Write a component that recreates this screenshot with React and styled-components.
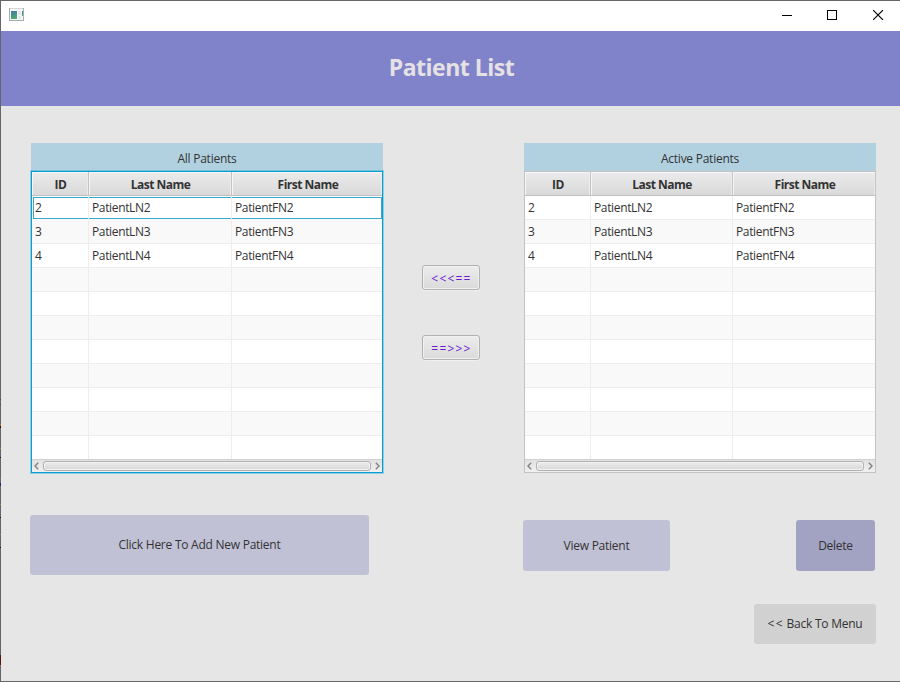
import React from 'react';
import styled, { createGlobalStyle, css } from 'styled-components';

const Global = createGlobalStyle`
  * { box-sizing: border-box; }
  body {
    margin: 0;
    background: #e6e6e6;
    font-family: "Open Sans", "Noto Sans", sans-serif;
    font-size: 12px;
    line-height: 16px;
    color: #333;
  }
  button { font: inherit; color: inherit; border: 0; padding: 0; margin: 0; }
`;

const Window = styled.div`
  display: flex;
  width: 900px;
  height: 682px;
  overflow: hidden;
  border-top: 1px solid #666;
  border-bottom: 1px solid #666;
  background: #e6e6e6;
`;

const mark = (color, from, to) =>
  `transparent ${from}px, ${color} ${from}px, ${color} ${to}px, transparent ${to}px`;

const LeftEdge = styled.div`
  width: 1px;
  flex: none;
  background:
    linear-gradient(
      ${mark('#484848', 398, 399)}, ${mark('#484848', 403, 404)},
      ${mark('#a06a2c', 423, 425)}, ${mark('#1c1510', 425, 427)},
      ${mark('#a87d3e', 447, 448)}, ${mark('#161616', 456, 457)},
      ${mark('#8a7350', 478, 479)}, ${mark('#1d2f66', 482, 485)},
      ${mark('#a87d3e', 503, 504)}, ${mark('#101010', 516, 517)},
      ${mark('#a87d3e', 533, 534)}, ${mark('#101010', 546, 547)},
      ${mark('#501515', 654, 664)}, ${mark('#a07040', 664, 665)}
    ),
    #666;
`;

const Frame = styled.div`
  flex: 1;
  display: flex;
  flex-direction: column;
`;

const TitleBar = styled.div`
  display: flex;
  justify-content: space-between;
  height: 30px;
  background: #fff;
`;

const AppIcon = styled.svg`
  width: 16px;
  height: 14px;
  margin: 7px 0 0 8px;
`;

const WindowControls = styled.div`
  display: flex;
  gap: 35px;
  padding: 9px 16px 0 0;
`;

const ControlIcon = styled.svg`
  width: 11px;
  height: 10px;
`;

const Banner = styled.header`
  height: 75px;
  background: #8083c9;
  text-align: center;
`;

const Title = styled.h1`
  margin: 0 0 0 2px;
  padding-top: 20px;
  font-size: 23px;
  line-height: 32px;
  font-weight: 700;
  letter-spacing: -0.5px;
  color: #e6e1e4;
`;

const Row = styled.div`
  display: flex;
  align-items: flex-start;
`;

const Tables = styled(Row)`
  padding: 37px 0 0 30px;
`;

const Panel = styled.section`
  width: 352px;
`;

const PanelTitle = styled.div`
  height: 28px;
  padding-top: 8px;
  background: #b1d1e1;
  text-align: center;
  letter-spacing: -0.25px;
`;

const Table = styled.div`
  height: 302px;
  border: 1px solid ${(p) => (p.$focused ? '#039ed3' : '#c3c3c3')};
  box-shadow: ${(p) => (p.$focused ? '0 0 0 1px rgba(3, 158, 211, 0.35)' : 'none')};
  background: #fff;
`;

const Line = styled.div`
  display: grid;
  grid-template-columns: ${(p) => p.$columns};
`;

const HeadCell = styled.div`
  height: 24px;
  padding: 5px 0 0 1px;
  border-right: 1px solid #c3c3c3;
  border-bottom: 1px solid #c0c0c0;
  box-shadow: inset 1px 1px 0 #f6f6f6, inset -1px 0 0 #ececec;
  background: linear-gradient(#ebebeb, #d9d9d9);
  font-weight: 700;
  text-align: center;
  letter-spacing: -0.5px;
  &:last-child { border-right: 0; padding-left: 2px; }
`;

const Cell = styled.div`
  height: ${(p) => (p.$last ? 23 : 24)}px;
  padding: 4px 0 0 3px;
  border-right: 1px solid #ededed;
  border-bottom: ${(p) => (p.$last ? 0 : 1)}px solid #ededed;
  background: ${(p) => (p.$odd ? '#f9f9f9' : '#fff')};
  letter-spacing: -0.35px;
  &:last-child { border-right: 0; }
  ${(p) => p.$focused && css`
    border-bottom-color: #f9f9f9;
    box-shadow: inset 0 1px 0 #fff, inset 0 2px 0 #35a9d0, inset 0 -1px 0 #35a9d0;
    &:first-child {
      box-shadow: inset 1px 1px 0 #fff, inset 2px 2px 0 #35a9d0, inset 0 -1px 0 #35a9d0;
    }
    &:last-child {
      box-shadow: inset 0 1px 0 #fff, inset -1px 2px 0 #35a9d0, inset 0 -1px 0 #35a9d0;
    }
  `}
`;

const ScrollBar = styled.div`
  display: flex;
  justify-content: space-between;
  align-items: center;
  height: 13px;
  padding: 0 2px;
  border-top: 1px solid #d0d0d0;
  background: linear-gradient(#e2e2e2, #f0f0f0);
`;

const Thumb = styled.div`
  width: 328px;
  height: 10px;
  border: 1px solid #b0b0b0;
  border-radius: 3px;
  box-shadow: inset 0 0 0 1px #f3f3f3;
  background: linear-gradient(#ececec, #d8d8d8);
`;

const Chevron = styled.svg`
  width: 5px;
  height: 8px;
  fill: none;
  stroke: #858585;
  stroke-width: 1.5;
`;

const Transfers = styled.div`
  display: flex;
  flex-direction: column;
  gap: 45px;
  margin: 122px 44px 0 39px;
`;

const TransferButton = styled.button`
  width: 58px;
  height: 25px;
  border: 1px solid #b1b1b1;
  border-radius: 3px;
  background: linear-gradient(#ececec, #dadada);
  box-shadow: inset 0 0 0 1px #f1f1f1, 0 1px 0 #efefef;
  color: #6a1ad0;
  line-height: 25px;
  letter-spacing: 1.2px;
  text-indent: 1px;
`;

const ActionButton = styled.button`
  width: ${(p) => p.$width}px;
  height: ${(p) => p.$height}px;
  border-radius: 3px;
  background: ${(p) => p.$color};
  letter-spacing: -0.25px;
`;

const Arrows = styled.span`
  letter-spacing: 1.2px;
`;

const Actions = styled(Row)`
  padding: 42px 25px 0 29px;
`;

const RightActions = styled.div`
  display: flex;
  flex: 1;
  justify-content: space-between;
  margin: 5px 0 0 154px;
`;

const Footer = styled(Row)`
  justify-content: flex-end;
  padding: 33px 24px 0 0;
  margin-top: -4px;
`;

const patients = [2, 3, 4].map((id) => [id, `PatientLN${id}`, `PatientFN${id}`]);
const rows = Array.from({ length: 11 }, (_, i) => patients[i] || ['', '', '']);

function PatientTable({ title, columns, focused }) {
  return (
    <Panel>
      <PanelTitle>{title}</PanelTitle>
      <Table $focused={focused}>
        <Line $columns={columns}>
          {['ID', 'Last Name', 'First Name'].map((name) => (
            <HeadCell key={name}>{name}</HeadCell>
          ))}
        </Line>
        {rows.map((row, r) => (
          <Line key={r} $columns={columns}>
            {row.map((value, c) => (
              <Cell key={c} $odd={r % 2 === 1} $last={r === 10} $focused={focused && r === 0}>
                {value}
              </Cell>
            ))}
          </Line>
        ))}
        <ScrollBar>
          <Chevron viewBox="0 0 5 8">
            <path d="M4.2 .8L1 4L4.2 7.2" />
          </Chevron>
          <Thumb />
          <Chevron viewBox="0 0 5 8">
            <path d="M.8 .8L4 4L.8 7.2" />
          </Chevron>
        </ScrollBar>
      </Table>
    </Panel>
  );
}

export default function App() {
  return (
    <>
      <Global />
      <Window>
        <LeftEdge />
        <Frame>
          <TitleBar>
            <AppIcon viewBox="0 0 16 14">
              <defs>
                <linearGradient id="pane" x1="0" y1="0" x2="0.4" y2="1">
                  <stop offset="0" stopColor="#3f78a8" />
                  <stop offset="1" stopColor="#4fa870" />
                </linearGradient>
              </defs>
              <rect x=".5" y=".5" width="14" height="12" fill="#f6f6f6" stroke="#a9adb3" />
              <path d="M1 .5h13" stroke="#d5d8db" />
              <rect x="2" y="3" width="6" height="8" fill="url(#pane)" />
              <rect x="9" y="3" width="3" height="4" fill="#e6e8e8" />
              <rect x="9" y="8" width="3" height="3" fill="#e6e8e8" />
              <rect x="13" y="3" width="1" height="5" fill="url(#pane)" />
            </AppIcon>
            <WindowControls>
              <ControlIcon viewBox="0 0 11 10" shapeRendering="crispEdges">
                <rect x="1" y="5" width="10" height="1" fill="#000" />
              </ControlIcon>
              <ControlIcon viewBox="0 0 11 10" shapeRendering="crispEdges">
                <rect x=".5" y=".5" width="9" height="9" fill="none" stroke="#000" />
              </ControlIcon>
              <ControlIcon viewBox="0 0 11 10">
                <path d="M0 0L10 10M10 0L0 10" fill="none" stroke="#000" strokeWidth="1.1" />
              </ControlIcon>
            </WindowControls>
          </TitleBar>
          <Banner>
            <Title>Patient List</Title>
          </Banner>
          <Tables>
            <PatientTable title="All Patients" columns="57px 143px 150px" focused />
            <Transfers>
              <TransferButton>{'<<<=='}</TransferButton>
              <TransferButton>{'==>>>'}</TransferButton>
            </Transfers>
            <PatientTable title="Active Patients" columns="66px 142px 142px" />
          </Tables>
          <Actions>
            <ActionButton $width={339} $height={60} $color="#c1c1d6">
              Click Here To Add New Patient
            </ActionButton>
            <RightActions>
              <ActionButton $width={147} $height={51} $color="#c1c1d6">View Patient</ActionButton>
              <ActionButton $width={79} $height={51} $color="#a2a2c2">Delete</ActionButton>
            </RightActions>
          </Actions>
          <Footer>
            <ActionButton $width={122} $height={40} $color="#d1d1d1">
              <Arrows>{'<<'}</Arrows> Back To Menu
            </ActionButton>
          </Footer>
        </Frame>
      </Window>
    </>
  );
}
